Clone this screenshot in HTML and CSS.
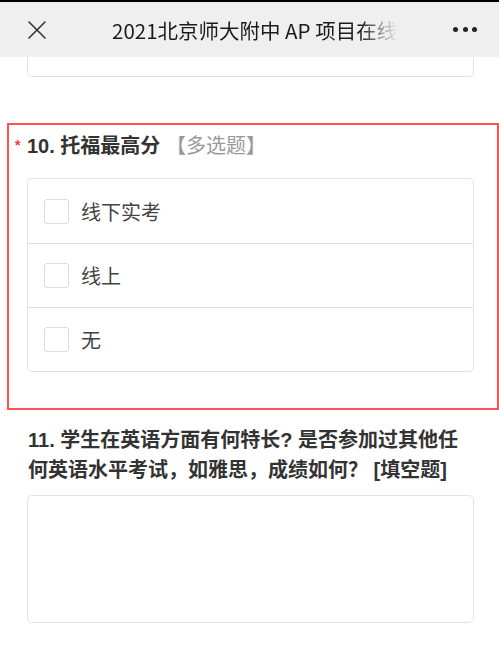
FILE: index.html
```html
<!DOCTYPE html>
<html lang="zh">
<head>
<meta charset="utf-8">
<title>2021北京师大附中AP项目在线报名</title>
<link rel="stylesheet" href="styles.css">
</head>
<body>
<header class="topbar">
  <span class="close-icon">
    <svg width="20" height="20" viewBox="0 0 20 20"><path d="M2 2 L18 18 M18 2 L2 18" stroke="#333" stroke-width="1.6" stroke-linecap="round" fill="none"/></svg>
  </span>
  <div class="page-title">2021北京师大附中 AP 项目在线报名表</div>
  <span class="more-icon"><i></i><i></i><i></i></span>
</header>
<main class="content">
  <div class="prev-input"></div>
  <section class="question q-error">
    <h2 class="q-title"><span class="req">*</span>10. 托福最高分 <span class="q-type">【多选题】</span></h2>
    <div class="options">
      <label class="option"><span class="checkbox"></span><span class="opt-text">线下实考</span></label>
      <label class="option"><span class="checkbox"></span><span class="opt-text">线上</span></label>
      <label class="option"><span class="checkbox"></span><span class="opt-text">无</span></label>
    </div>
  </section>
  <section class="question q-plain">
    <h2 class="q-title">11. 学生在英语方面有何特长? 是否参加过其他任何英语水平考试，如雅思，成绩如何？ [填空题]</h2>
    <div class="textarea"></div>
  </section>
</main>
</body>
</html>
```
FILE: styles.css
```css
* { box-sizing: border-box; }
html, body { margin: 0; padding: 0; background: #fff; }
body { font-family: "Liberation Sans", "Noto Sans CJK SC", sans-serif; color: #333; }

.topbar {
  border-top: 2px solid #000;
  height: 57px;
  background: #efefef;
  display: flex;
  align-items: center;
  padding-left: 27px;
  padding-right: 22px;
}
.close-icon { width: 20px; height: 20px; display: flex; }
.page-title {
  margin-left: 65px;
  width: 288px;
  font-family: "Noto Sans CJK SC", sans-serif;
  font-size: 20.5px;
  line-height: 28px;
  color: #1b1b1b;
  white-space: nowrap;
  overflow: hidden;
  -webkit-mask-image: linear-gradient(to right, #000 86%, rgba(0,0,0,0.02) 99%);
  mask-image: linear-gradient(to right, #000 86%, rgba(0,0,0,0.02) 99%);
}
.more-icon { margin-left: auto; display: flex; gap: 4.5px; }
.more-icon i { width: 5px; height: 5px; border-radius: 50%; background: #222; display: block; }

.content { display: flex; flex-direction: column; }
.prev-input {
  margin-left: 27px;
  width: 447px;
  height: 20px;
  border: 1px solid #e2e2e2;
  border-top: none;
  border-radius: 0 0 5px 5px;
}

.question { margin: 0; }
.q-title {
  margin: 0;
  font-size: 20px;
  line-height: 30px;
  font-weight: bold;
  color: #333;
}
.q-error {
  margin-top: 46px;
  margin-left: 7px;
  width: 492px;
  border: 2px solid #ff5252;
  padding: 6px 23px 36px 18px;
}
.req {
  display: inline-block;
  width: 12px;
  margin-left: -12px;
  color: #f33;
  font-size: 14px;
  font-weight: bold;
  vertical-align: top;
  line-height: 28px;
}
.q-type { font-weight: normal; color: #999; }

.options {
  margin-top: 17px;
  border: 1px solid #e3e3e3;
  border-radius: 5px;
  display: flex;
  flex-direction: column;
}
.option {
  height: 64px;
  display: flex;
  align-items: center;
  padding-left: 16px;
}
.option + .option { border-top: 1px solid #e3e3e3; }
.checkbox {
  width: 25px;
  height: 25px;
  border: 1px solid #d8dcdc;
  border-radius: 3px;
  background: #fff;
}
.opt-text {
  margin-left: 12px;
  font-size: 20px;
  color: #444;
}

.q-plain {
  margin-top: 15px;
  padding: 0 25px 0 28px;
}
.textarea {
  margin-top: 10px;
  margin-left: -1px;
  width: 447px;
  height: 128px;
  border: 1px solid #e3e3e3;
  border-radius: 5px;
}
```
